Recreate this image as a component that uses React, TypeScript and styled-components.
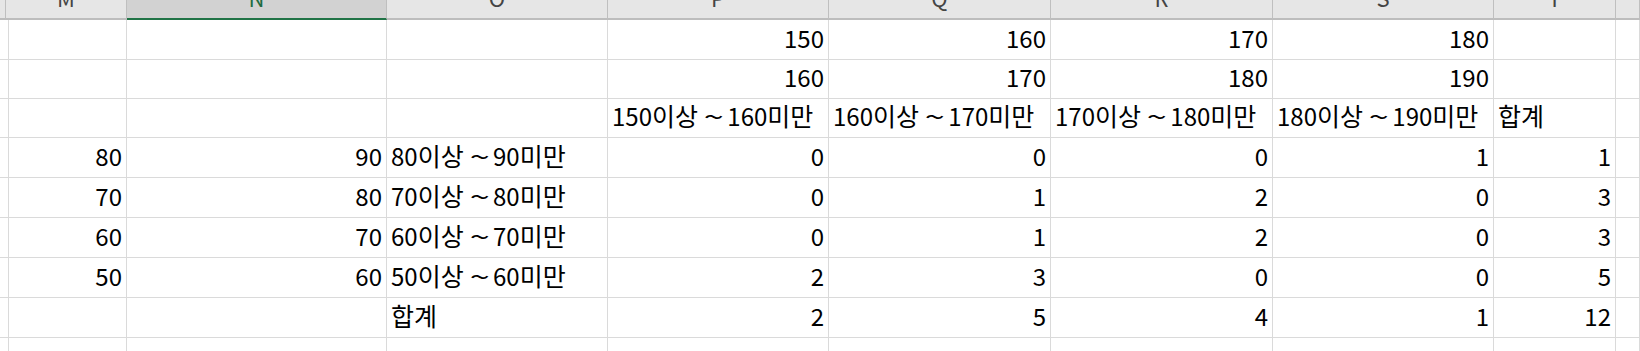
import styled, { createGlobalStyle } from 'styled-components';

const GlobalStyle = createGlobalStyle`
  html, body {
    margin: 0;
    padding: 0;
    background: #ffffff;
  }

  body {
    font-family: "Noto Sans CJK KR", "Noto Sans", sans-serif;
    overflow: hidden;
  }
`;

const COLUMNS = '6px 121px 260px 221px 221px 222px 222px 221px 122px 1fr';

const Sheet = styled.div`
  display: flex;
  flex-direction: column;

  width: 1640px;
  height: 351px;

  overflow: hidden;
`;

const HeaderRow = styled.div`
  display: grid;
  grid-template-columns: ${COLUMNS};

  height: 20px;
`;

const HeaderCell = styled.div<{ $selected?: boolean }>`
  display: flex;
  justify-content: center;
  align-items: flex-start;

  box-sizing: border-box;
  height: 20px;
  overflow: hidden;

  background-color: ${(p) => (p.$selected ? '#d2d2d2' : '#e6e6e6')};
  color: ${(p) => (p.$selected ? '#1e6b41' : '#444444')};

  border-right: 1px solid #bfbfbf;
  border-bottom: 2px solid ${(p) => (p.$selected ? '#217346' : '#bdbdbd')};

  font-size: 22px;
  line-height: 22px;
`;

const HeaderLabel = styled.span`
  margin-top: -14px;
`;

const Row = styled.div<{ $h: number }>`
  display: grid;
  grid-template-columns: ${COLUMNS};

  height: ${(p) => p.$h}px;
  flex-shrink: 0;
`;

const Cell = styled.div<{ $left?: boolean }>`
  display: flex;
  align-items: flex-end;
  justify-content: ${(p) => (p.$left ? 'flex-start' : 'flex-end')};

  box-sizing: border-box;
  overflow: hidden;

  padding: 0 4px 9px 4px;

  border-right: 1px solid #dadada;
  border-bottom: 1px solid #dadada;

  color: #000000;
  font-size: 24px;
  line-height: 24px;
  white-space: nowrap;
`;

const Hangul = styled.span`
  font-size: 25px;
`;

const Tilde = styled.span`
  display: inline-block;
  margin: 0 7px 0 9px;
  transform: scaleX(1.5);
`;

type Value = string | number | null;

// L(edge), M, N, O, P, Q, R, S, T, U
const rows: { h: number; cells: Value[] }[] = [
  { h: 40, cells: [null, null, null, null, 150, 160, 170, 180, null, null] },
  { h: 39, cells: [null, null, null, null, 160, 170, 180, 190, null, null] },
  {
    h: 39,
    cells: [
      null,
      null,
      null,
      null,
      '150이상~160미만',
      '160이상~170미만',
      '170이상~180미만',
      '180이상~190미만',
      '합계',
      null,
    ],
  },
  { h: 40, cells: [null, 80, 90, '80이상~90미만', 0, 0, 0, 1, 1, null] },
  { h: 40, cells: [null, 70, 80, '70이상~80미만', 0, 1, 2, 0, 3, null] },
  { h: 40, cells: [null, 60, 70, '60이상~70미만', 0, 1, 2, 0, 3, null] },
  { h: 40, cells: [null, 50, 60, '50이상~60미만', 2, 3, 0, 0, 5, null] },
  { h: 40, cells: [null, null, null, '합계', 2, 5, 4, 1, 12, null] },
  { h: 40, cells: [null, null, null, null, null, null, null, null, null, null] },
];

const headers = ['', 'M', 'N', 'O', 'P', 'Q', 'R', 'S', 'T', ''];

// split a label into digit, tilde and hangul runs so each gets its spacing
const Label = ({ text }: { text: string }) => (
  <span>
    {text
      .split(/(\d+|~)/)
      .filter(Boolean)
      .map((part, i) => {
        if (/^\d+$/.test(part)) return <span key={i}>{part}</span>;
        if (part === '~') return <Tilde key={i}>~</Tilde>;
        return <Hangul key={i}>{part}</Hangul>;
      })}
  </span>
);

export default function App() {
  return (
    <>
      <GlobalStyle />
      <Sheet>
        <HeaderRow>
          {headers.map((h, i) => (
            <HeaderCell key={i} $selected={h === 'N'}>
              <HeaderLabel>{h}</HeaderLabel>
            </HeaderCell>
          ))}
        </HeaderRow>
        {rows.map((row, r) => (
          <Row key={r} $h={row.h}>
            {row.cells.map((v, c) => (
              <Cell key={c} $left={typeof v === 'string'}>
                {typeof v === 'string' ? <Label text={v} /> : v}
              </Cell>
            ))}
          </Row>
        ))}
      </Sheet>
    </>
  );
}
